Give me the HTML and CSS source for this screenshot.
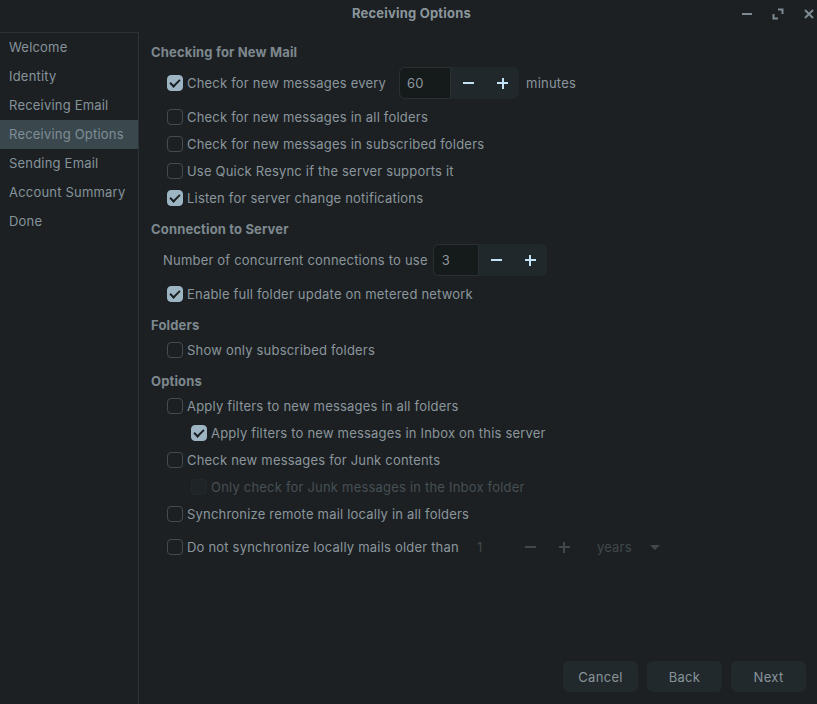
FILE: index.html
```
<!DOCTYPE html>
<html>
<head>
<meta charset="utf-8">
<link rel="stylesheet" href="styles.css">
</head>
<body>
<div class="window">
  <header class="titlebar">
    <div class="title">Receiving Options</div>
    <div class="controls">
      <svg class="ctl" width="12" height="12" viewBox="0 0 12 12"><rect x="1" y="5" width="10" height="2" fill="#7d8a91"/></svg>
      <svg class="ctl" width="12" height="12" viewBox="0 0 12 12"><path d="M6 1.5h4.5V6M1.5 6v4.5H6" fill="none" stroke="#7d8a91" stroke-width="2"/></svg>
      <svg class="ctl" width="12" height="12" viewBox="0 0 12 12"><path d="M2 2l8 8M10 2l-8 8" stroke="#7d8a91" stroke-width="2"/></svg>
    </div>
  </header>
  <div class="body">
    <nav class="sidebar">
      <div class="item">Welcome</div>
      <div class="item">Identity</div>
      <div class="item">Receiving Email</div>
      <div class="item selected">Receiving Options</div>
      <div class="item">Sending Email</div>
      <div class="item">Account Summary</div>
      <div class="item">Done</div>
    </nav>
    <main class="content">
      <div class="form">
        <h2 class="heading first">Checking for New Mail</h2>
        <div class="row tall ind1">
          <span class="cb on"></span><span class="label">Check for new messages every</span>
          <div class="spin s1"><span class="entry">60</span><span class="btn minus"></span><span class="btn plus"></span></div>
          <span class="label after">minutes</span>
        </div>
        <div class="row ind1"><span class="cb"></span><span class="label">Check for new messages in all folders</span></div>
        <div class="row ind1"><span class="cb"></span><span class="label">Check for new messages in subscribed folders</span></div>
        <div class="row ind1"><span class="cb"></span><span class="label">Use Quick Resync if the server supports it</span></div>
        <div class="row ind1"><span class="cb on"></span><span class="label">Listen for server change notifications</span></div>

        <h2 class="heading">Connection to Server</h2>
        <div class="row tall ind0">
          <span class="label">Number of concurrent connections to use</span>
          <div class="spin s2"><span class="entry">3</span><span class="btn minus"></span><span class="btn plus"></span></div>
        </div>
        <div class="row ind1"><span class="cb on"></span><span class="label">Enable full folder update on metered network</span></div>

        <h2 class="heading">Folders</h2>
        <div class="row ind1"><span class="cb"></span><span class="label">Show only subscribed folders</span></div>

        <h2 class="heading">Options</h2>
        <div class="row ind1"><span class="cb"></span><span class="label">Apply filters to new messages in all folders</span></div>
        <div class="row ind2"><span class="cb on"></span><span class="label">Apply filters to new messages in Inbox on this server</span></div>
        <div class="row ind1"><span class="cb"></span><span class="label">Check new messages for Junk contents</span></div>
        <div class="row ind2 disabled"><span class="cb dis"></span><span class="label">Only check for Junk messages in the Inbox folder</span></div>
        <div class="row ind1"><span class="cb"></span><span class="label">Synchronize remote mail locally in all folders</span></div>
        <div class="row tall ind1">
          <span class="cb"></span><span class="label">Do not synchronize locally mails older than</span>
          <div class="spin dspin"><span class="entry">1</span><span class="btn minus"></span><span class="btn plus"></span></div>
          <div class="combo"><span>years</span><span class="arrow"></span></div>
        </div>
      </div>
      <div class="actions">
        <button class="abtn">Cancel</button>
        <button class="abtn">Back</button>
        <button class="abtn">Next</button>
      </div>
    </main>
  </div>
</div>
</body>
</html>
```
FILE: styles.css
```
* { box-sizing: border-box; }
html, body { margin: 0; padding: 0; }
body {
  background: #1c2023;
  font-family: Inter, "Noto Sans", sans-serif;
  font-size: 13px;
  color: #8b969c;
  letter-spacing: 0.2px;
}
.window { width: 817px; height: 704px; display: flex; flex-direction: column; }
.titlebar {
  height: 32px;
  position: relative;
  display: flex;
  align-items: center;
  justify-content: center;
}
.title { font-weight: 700; color: #8a969c; font-size: 13px; margin-top: -7px; margin-left: 6px; letter-spacing: 0.2px; }
.controls {
  position: absolute;
  right: 2px;
  top: 8px;
  display: flex;
  gap: 19px;
}
.ctl { display: block; }
.body { flex: 1; display: flex; min-height: 0; }
.sidebar {
  width: 139px;
  border-top: 1px solid #2b3236;
  border-right: 1px solid #2b3437;
  display: flex;
  flex-direction: column;
}
.item {
  height: 29px;
  line-height: 29px;
  padding-left: 9px;
  color: #86939a;
  white-space: nowrap;
}
.selected { background: #3a484e; color: #7f8d94; }
.content {
  flex: 1;
  display: flex;
  flex-direction: column;
  padding: 10px 11px 12px 12px;
}
.form { flex: 1; display: flex; flex-direction: column; }
.heading {
  margin: 8px 0 2px;
  padding-top: 1px;
  font-size: 13px;
  font-weight: 700;
  line-height: 18px;
  color: #7d888e;
  letter-spacing: 0.15px;
}
.heading.first { margin-top: 0; }
.row {
  height: 27px;
  display: flex;
  align-items: center;
  white-space: nowrap;
}
.row.tall { height: 40px; }
.ind0 { padding-left: 12px; }
.ind1 { padding-left: 16px; }
.ind2 { padding-left: 40px; }
.cb {
  width: 16px;
  height: 16px;
  border: 1px solid #434b50;
  border-radius: 4px;
  margin-right: 4px;
  flex: none;
  position: relative;
}
.cb.on { background: #9db4c3; border-color: #9db4c3; }
.cb.on::after {
  content: "";
  position: absolute;
  left: 4px;
  top: 1px;
  width: 4px;
  height: 8px;
  border: solid #1c2023;
  border-width: 0 2.5px 2.5px 0;
  transform: rotate(45deg);
}
.cb.dis { border-color: #22292c; background: #1f2427; }
.label { color: #8b969c; }
.disabled .label { color: #464f54; }
.label.after { margin-left: 7px; }
.spin {
  height: 32px;
  display: flex;
  border-radius: 6px;
  background: #21282b;
  margin-left: 5px;
}
.s1 { margin-left: 13px; }
.entry {
  background: #151a1b;
  border: 1px solid #293033;
  border-radius: 6px 0 0 6px;
  display: flex;
  align-items: center;
  padding-left: 7px;
  color: #8b969c;
}
.s1 .entry { width: 52px; }
.s2 .entry { width: 46px; padding-left: 8px; }
.btn { width: 34px; position: relative; }
.btn::before {
  content: "";
  position: absolute;
  left: 12px;
  top: 15px;
  width: 11px;
  height: 2px;
  background: #c3e3f5;
}
.plus::after {
  content: "";
  position: absolute;
  left: 16.5px;
  top: 10.5px;
  width: 2px;
  height: 11px;
  background: #c3e3f5;
}
.dspin { background: transparent; margin-left: 14px; }
.dspin .entry { background: transparent; border: none; width: 40px; padding-left: 4px; color: #40484c; }
.dspin .btn::before, .dspin .plus::after { background: #40484c; }
.combo {
  display: flex;
  align-items: center;
  color: #40484c;
  margin-left: 16px;
}
.arrow {
  margin-left: 18px;
  width: 0;
  height: 0;
  border-left: 5px solid transparent;
  border-right: 5px solid transparent;
  border-top: 5px solid #40484c;
}
.actions { display: flex; justify-content: flex-end; gap: 9px; }
.abtn {
  width: 75px;
  height: 31px;
  border: none;
  border-radius: 6px;
  background: #22292c;
  color: #87949a;
  font-family: Inter, "Noto Sans", sans-serif;
  font-size: 13px;
  letter-spacing: 0.3px;
  padding: 0;
}
```
